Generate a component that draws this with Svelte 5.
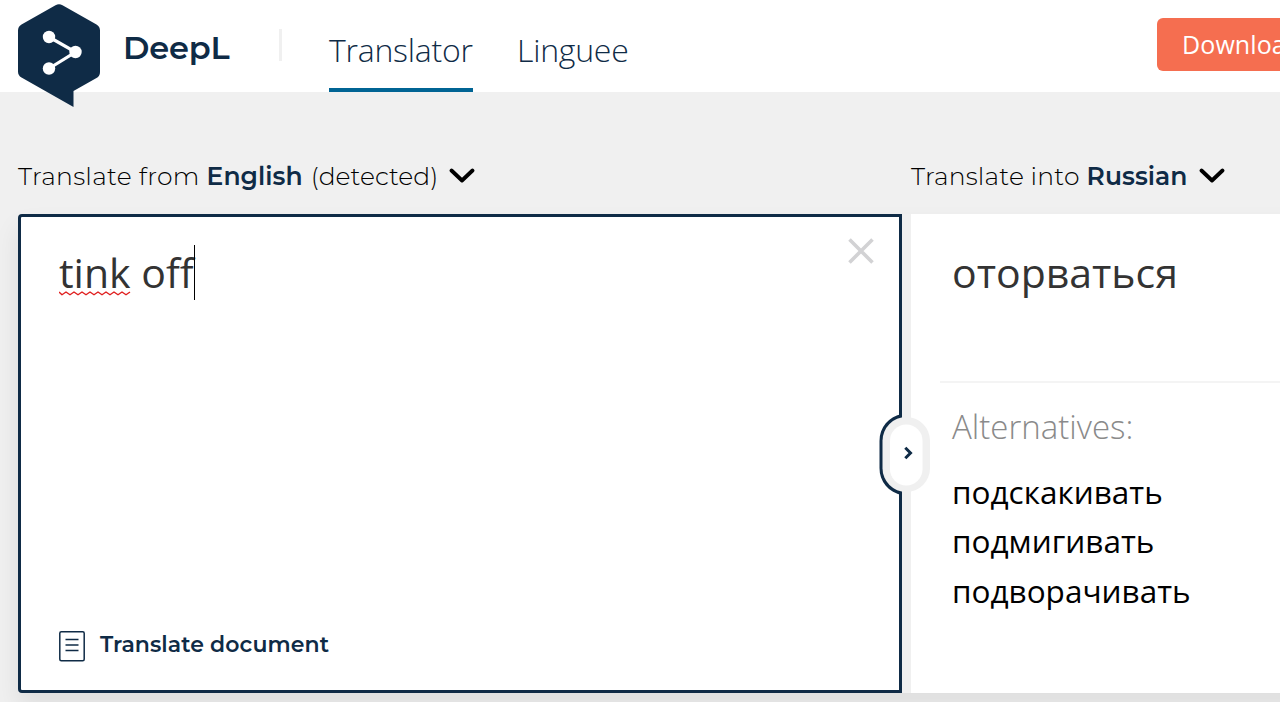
<script>
  let sourceText = ['tink', 'off'];
  let translation = 'оторваться';
  let alternatives = ['подскакивать', 'подмигивать', 'подворачивать'];
</script>

<div class="page">
  <header>
    <svg class="logo" width="84" height="104" viewBox="0 0 84 104">
      <path d="M38.5 1.2Q42 -0.8 45.5 1.2L79.5 20.5Q83 22.5 83 26.5V68Q83 72 79.5 74L56.5 87V103L4.5 73.5Q1 71.5 1 67.5V26.5Q1 22.5 4.5 20.5Z" fill="#0f2b46" />
      <path d="M32 33L58.5 48L32 64.5" fill="none" stroke="#fff" stroke-width="3.2" />
      <circle cx="32" cy="33" r="6.2" fill="#fff" />
      <circle cx="58.5" cy="48" r="6.2" fill="#fff" />
      <circle cx="32" cy="64.5" r="6.2" fill="#fff" />
    </svg>
    <span class="brand">DeepL</span>
    <span class="divider"></span>
    <nav>
      <a class="active" href="#translator">Translator</a>
      <a href="#linguee">Linguee</a>
    </nav>
    <button class="download">Download</button>
  </header>

  <main>
    <div class="languages">
      <button class="lang">
        <span class="from">Translate from</span>
        <strong>English</strong>
        <span class="detected">(detected)</span>
        <svg width="26" height="16" viewBox="0 0 26 16"><path d="M2.5 2.5L13 12.5L23.5 2.5" /></svg>
      </button>
      <button class="lang">
        <span class="into">Translate into</span>
        <strong class="russian">Russian</strong>
        <svg width="26" height="16" viewBox="0 0 26 16"><path d="M2.5 2.5L13 12.5L23.5 2.5" /></svg>
      </button>
    </div>

    <div class="panels">
      <section class="source">
        <div class="source-top">
          <p class="text"><span class="typo">{sourceText[0]}<svg class="squiggle" width="72" height="5" viewBox="0 0 72 5"><path d="M0 1L3 3.8L7 1L11 3.8L15 1L19 3.8L23 1L27 3.8L31 1L35 3.8L39 1L43 3.8L47 1L51 3.8L55 1L59 3.8L63 1L67 3.8L71 1" /></svg></span> {sourceText[1]}<span class="caret"></span></p>
          <svg class="clear" width="26" height="26" viewBox="0 0 26 26"><path d="M1.5 1.5L24.5 24.5M24.5 1.5L1.5 24.5" /></svg>
        </div>
        <div class="document">
          <svg width="26" height="31" viewBox="0 0 26 31">
            <rect x="0.8" y="0.8" width="24.4" height="29" rx="1.5" />
            <path d="M6.5 8.5H19.5M6.5 14H19.5M6.5 19.5H19.5" />
          </svg>
          <span>Translate document</span>
        </div>
      </section>

      <section class="target">
        <p class="text">{translation}</p>
        <div class="alternatives">
          <h2>Alternatives:</h2>
          <ul>
            {#each alternatives as word}
              <li>{word}</li>
            {/each}
          </ul>
        </div>
      </section>

      <svg class="toggle" width="52" height="82" viewBox="0 0 52 82">
        <path d="M23 0A27 27 0 0 0 0.5 27V54A27 27 0 0 0 23 81Z" fill="#0f2b46" />
        <rect x="3.5" y="3" width="47.5" height="75" rx="23.75" fill="#f0f0f0" />
        <rect x="11" y="10.5" width="32.5" height="61" rx="16.25" fill="#fff" />
        <path d="M26.3 33.8L31.5 39L26.3 44.2" fill="none" stroke="#0f2b46" stroke-width="3" />
      </svg>
    </div>
  </main>
</div>

<style>
  :global(body) {
    margin: 0;
    overflow: hidden;
  }

  .page {
    width: 100%;
    height: 702px;
    overflow: hidden;
    background: #f0f0f0;
    font-family: 'Open Sans', sans-serif;
  }

  p, h2, ul {
    margin: 0;
    padding: 0;
    list-style: none;
  }

  button {
    border: 0;
    padding: 0;
    background: none;
  }

  header {
    display: flex;
    width: 1480px;
    height: 92px;
    padding-left: 17px;
    background: #fff;
  }

  .logo {
    margin-top: 4px;
    flex: none;
    z-index: 1;
  }

  .brand {
    width: 156px;
    margin-left: 22px;
    font: 600 32px/95px Montserrat, Inter, sans-serif;
    color: #0f2b46;
    letter-spacing: -0.2px;
  }

  .divider {
    width: 3px;
    height: 32px;
    margin-top: 29px;
    background: #f0f0f0;
  }

  nav {
    display: flex;
    width: 828px;
    margin-left: 47px;
    gap: 44px;
  }

  nav a {
    box-sizing: border-box;
    height: 92px;
    font-size: 32px;
    font-weight: 300;
    line-height: 99px;
    letter-spacing: -0.25px;
    color: #0f2b46;
    text-decoration: none;
    white-space: nowrap;
  }

  nav .active {
    width: 144px;
    border-bottom: 4px solid #006494;
  }

  .download {
    width: 320px;
    height: 53px;
    margin-top: 18px;
    padding-left: 25px;
    border-radius: 6px;
    background: #f56e50;
    color: #fff;
    font: 400 25px/51px 'Open Sans', sans-serif;
    letter-spacing: 0.1px;
    text-align: left;
  }

  main {
    width: 1480px;
    padding-left: 18px;
  }

  .languages {
    display: grid;
    grid-template-columns: 893px 1fr;
    height: 122px;
  }

  .lang {
    display: flex;
    align-items: center;
    height: 168px;
    font: 300 25px/32px Montserrat, Inter, sans-serif;
    color: #000;
    white-space: nowrap;
  }

  .from {
    letter-spacing: 0.28px;
  }

  .into {
    letter-spacing: 0.17px;
  }

  .lang strong {
    margin: 0 8px 0 7px;
    font-weight: 600;
    letter-spacing: 0.05px;
    color: #0f2b46;
  }

  .lang svg {
    margin-left: 11px;
    fill: none;
    stroke: #000;
    stroke-width: 3.8;
    stroke-linecap: round;
    stroke-linejoin: round;
  }

  .lang .russian + svg {
    margin-left: 3px;
  }

  .panels {
    position: relative;
    display: grid;
    grid-template-columns: 884px 1fr;
    gap: 9px;
    height: 479px;
    background: #f0f0f0;
    box-shadow: 0 14px 24px rgba(0, 0, 0, 0.08);
  }

  .source {
    display: flex;
    flex-direction: column;
    justify-content: space-between;
    box-sizing: border-box;
    padding: 22px 25px 28px 38px;
    border: 3px solid #0f2b46;
    border-radius: 4px 0 0 4px;
    background: #fff;
  }

  .source-top {
    display: flex;
    justify-content: space-between;
  }

  .text {
    font-size: 41px;
    line-height: 64px;
    color: #333;
  }

  .source .text {
    display: flex;
    align-items: center;
    padding-top: 1px;
    white-space: pre;
  }

  .typo {
    position: relative;
  }

  .squiggle {
    position: absolute;
    left: 0;
    bottom: 8px;
    fill: none;
    stroke: #e02020;
    stroke-width: 1.4;
    stroke-linejoin: round;
  }

  .caret {
    width: 1px;
    height: 55px;
    background: #000;
  }

  .clear {
    margin-top: -1px;
    stroke: #d2d2d4;
    stroke-width: 3.6;
  }

  .document {
    display: flex;
    align-items: center;
    gap: 15px;
    font: 600 22px/28px Montserrat, Inter, sans-serif;
    letter-spacing: 0.07px;
    color: #0f2b46;
  }

  .document span {
    padding-bottom: 3px;
  }

  .document svg {
    fill: none;
    stroke: #0f2b46;
    stroke-width: 1.5;
  }

  .target {
    background: #fff;
    padding: 26px 0 0 29px;
  }

  .target .text {
    height: 141px;
    padding-left: 12px;
  }

  .alternatives {
    border-top: 2px solid #f4f4f4;
    padding: 19px 0 0 12px;
  }

  h2 {
    font-size: 33px;
    font-weight: 300;
    line-height: 50px;
    color: #8a8a8a;
  }

  ul {
    margin-top: 15px;
  }

  li {
    font-size: 31.5px;
    line-height: 49.3px;
    color: #000;
  }

  .toggle {
    position: absolute;
    left: 861px;
    top: 200px;
  }
</style>
